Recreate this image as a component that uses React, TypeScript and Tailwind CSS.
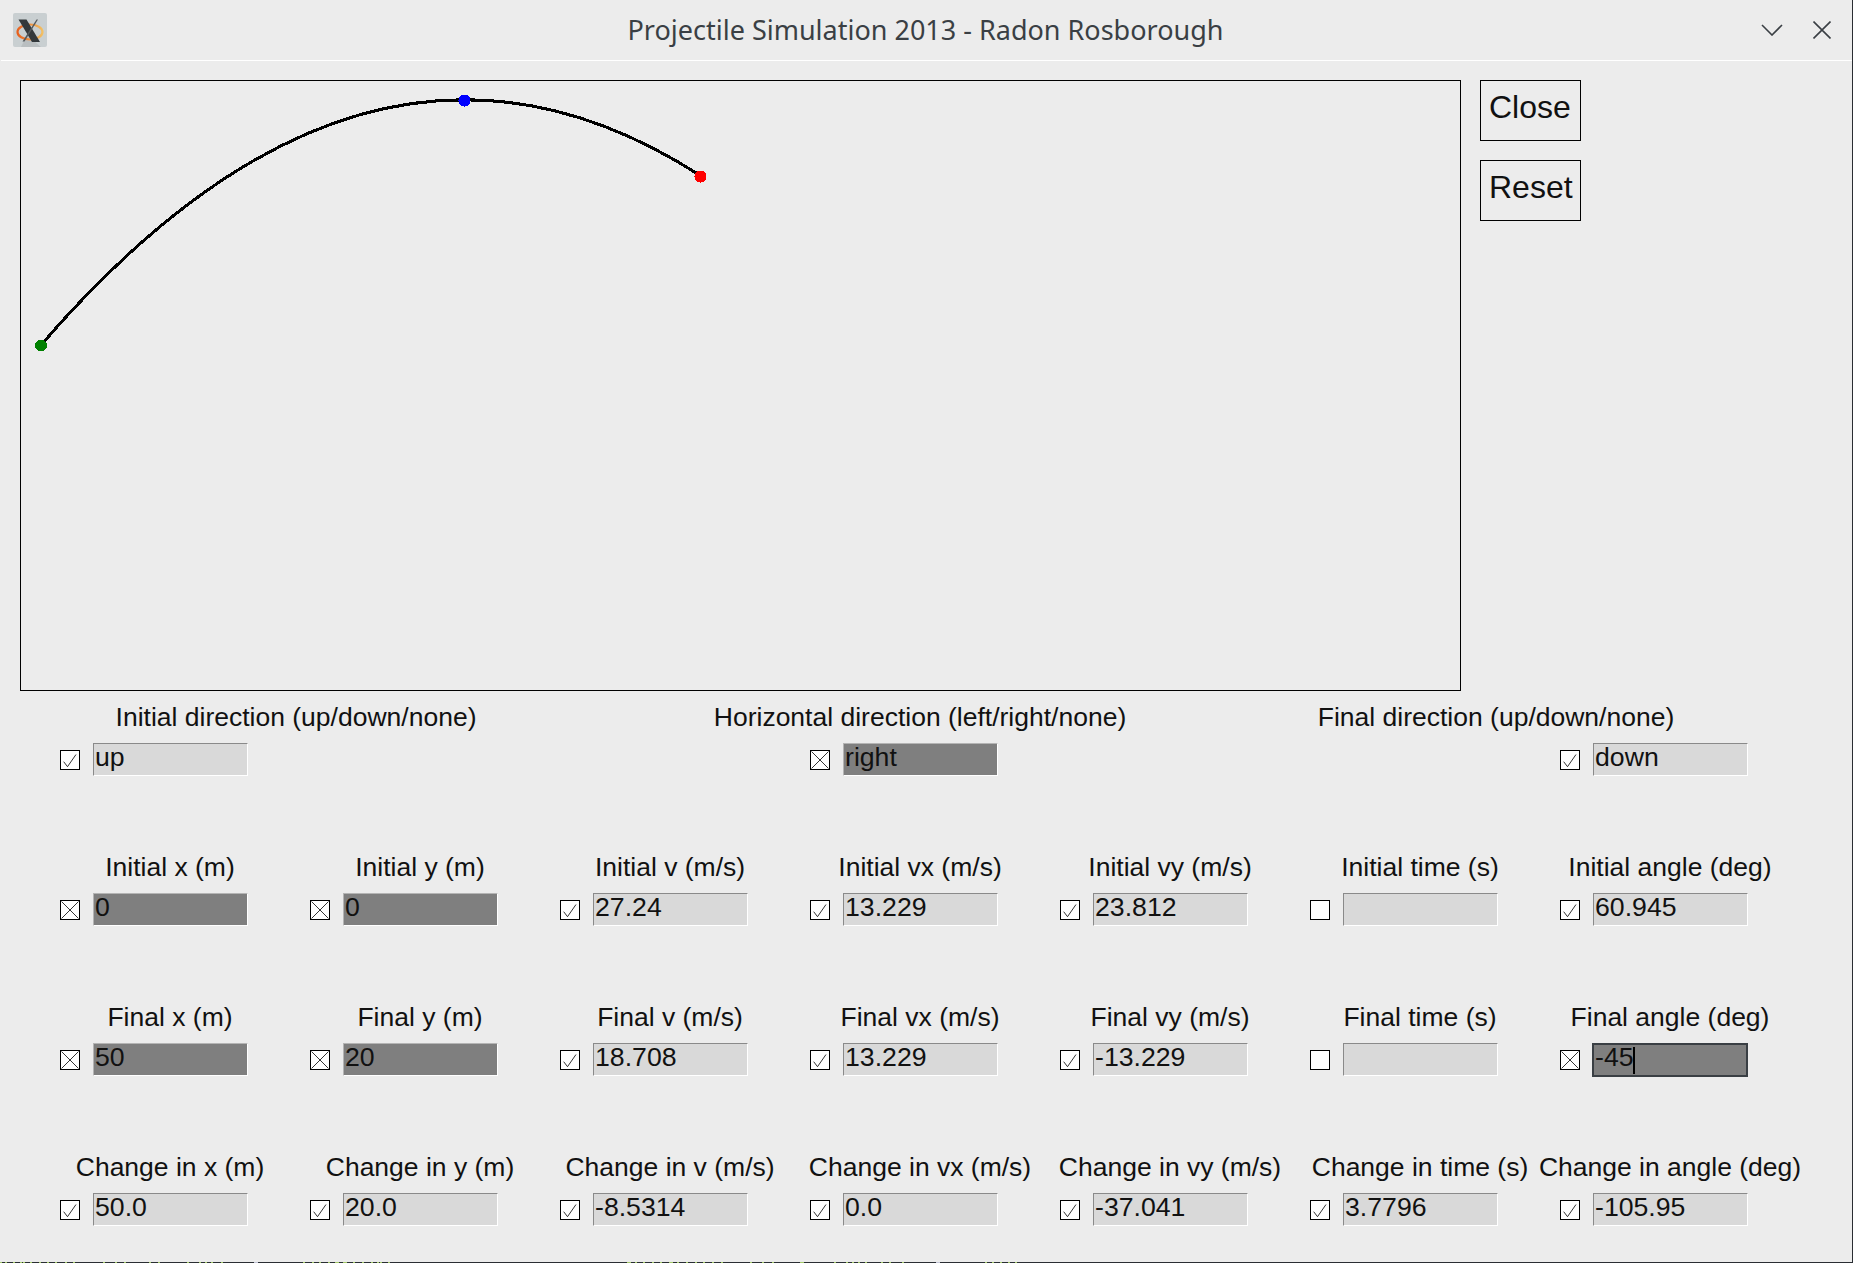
import { ReactNode } from "react";

const labelFont = "font-['Liberation_Sans',Arial,sans-serif]";

type Mark = "none" | "check" | "cross";

interface FieldProps {
  label?: string;
  value: string;
  mark: Mark;
  labelClass?: string;
  focused?: boolean;
}

function CheckBox({ mark }: { mark: Mark }) {
  return (
    <div className="h-5 w-5 shrink-0 border border-black bg-white">
      {mark !== "none" && (
        <svg viewBox="0 0 18 18" className="block h-[18px] w-[18px]" fill="none" stroke="#000" strokeWidth="0.8">
          {mark === "check" ? (
            <path d="M2.7 10.7 L6.5 15.7 L15 3.5" />
          ) : (
            <path d="M0.5 0.5 L17.5 17.5 M17.5 0.5 L0.5 17.5" />
          )}
        </svg>
      )}
    </div>
  );
}

function Field({ label, value, mark, labelClass = "ml-[42px]", focused = false }: FieldProps) {
  const filled = mark === "cross";
  let frame = "h-[33px] w-[155px] border pl-[1px] leading-[27px] border-r-white border-b-white";
  if (focused) {
    frame = "-ml-px h-[34px] w-[156px] border-2 border-[#3a3f44] pl-[1px] leading-[25px]";
  } else if (filled) {
    frame += " border-t-[#b4b4b4] border-l-[#b4b4b4]";
  } else {
    frame += " border-t-[#8a8a8a] border-l-[#8a8a8a]";
  }

  return (
    <div className="flex h-[150px] w-[250px] flex-col">
      <div className={`flex h-[43px] w-[156px] justify-center whitespace-nowrap pt-[2px] text-[26.5px] leading-[30px] text-[#111] ${labelClass}`}>
        {label}
      </div>
      <div className="flex h-[33px] items-center gap-[13px] pl-[10px]">
        <CheckBox mark={mark} />
        <div className={`relative shrink-0 text-[26.67px] text-[#111] ${frame} ${filled ? "bg-[#7f7f7f]" : "bg-[#d9d9d9]"}`}>
          {value}
          {focused && <span className="absolute top-[2px] left-[39px] h-[27px] w-[2px] bg-black" />}
        </div>
      </div>
    </div>
  );
}

function BoxButton({ children }: { children: ReactNode }) {
  return (
    <div className="flex h-[61px] w-[101px] items-start border border-black pl-2 pt-2 text-[32px] leading-[36px] text-[#111]">
      {children}
    </div>
  );
}

const rows: FieldProps[][] = [
  [
    { label: "Initial x (m)", value: "0", mark: "cross" },
    { label: "Initial y (m)", value: "0", mark: "cross" },
    { label: "Initial v (m/s)", value: "27.24", mark: "check" },
    { label: "Initial vx (m/s)", value: "13.229", mark: "check" },
    { label: "Initial vy (m/s)", value: "23.812", mark: "check" },
    { label: "Initial time (s)", value: "", mark: "none" },
    { label: "Initial angle (deg)", value: "60.945", mark: "check" },
  ],
  [
    { label: "Final x (m)", value: "50", mark: "cross" },
    { label: "Final y (m)", value: "20", mark: "cross" },
    { label: "Final v (m/s)", value: "18.708", mark: "check" },
    { label: "Final vx (m/s)", value: "13.229", mark: "check" },
    { label: "Final vy (m/s)", value: "-13.229", mark: "check" },
    { label: "Final time (s)", value: "", mark: "none" },
    { label: "Final angle (deg)", value: "-45", mark: "cross", focused: true },
  ],
  [
    { label: "Change in x (m)", value: "50.0", mark: "check" },
    { label: "Change in y (m)", value: "20.0", mark: "check" },
    { label: "Change in v (m/s)", value: "-8.5314", mark: "check" },
    { label: "Change in vx (m/s)", value: "0.0", mark: "check" },
    { label: "Change in vy (m/s)", value: "-37.041", mark: "check" },
    { label: "Change in time (s)", value: "3.7796", mark: "check" },
    { label: "Change in angle (deg)", value: "-105.95", mark: "check" },
  ],
];

// sliver of the window behind, showing along the bottom edge
const sliver = [
  0, 5, 13, 20, 23, 30, 39, 47, 55, 65, 73, 103, 115, 124, 149, 158, 187, 199, 205, 211, 221, 303, 312, 319, 328, 335, 337, 343, 345, 353, 362,
  371, 377, 380, 388, 627, 629, 635, 643, 652, 660, 669, 671, 677, 686, 695, 703, 712, 721, 750, 762, 772, 800, 802, 834, 846, 852, 858, 865,
  881, 889, 902, 985, 992, 1000, 1008, 1015,
];

function LogoIcon() {
  return (
    <svg viewBox="0 0 34 34" className="h-[34px] w-[34px]">
      <defs>
        <linearGradient id="ring" x1="0" y1="0" x2="1" y2="0">
          <stop offset="0" stopColor="#e8601c" />
          <stop offset="1" stopColor="#f2bf63" />
        </linearGradient>
      </defs>
      <rect width="34" height="34" rx="2" fill="#c9cfd1" />
      <path d="M8 34 L28 34 L14 22Z" fill="#b9bec0" />
      <ellipse cx="17" cy="19" rx="12.5" ry="7.5" fill="none" stroke="url(#ring)" strokeWidth="2.2" />
      <path d="M5.5 6.5 H13.5 L27 29 H19Z" fill="#33383b" />
      <path d="M23.5 6.5 L25 6.5 L11.5 28.5 L9.5 28.5Z" fill="#55595c" />
    </svg>
  );
}

export default function App() {
  return (
    <div className={`relative flex h-[1263px] w-[1853px] flex-col overflow-hidden border-r border-[#2a2e33] bg-[#ececec] ${labelFont}`}>
      {/* title bar */}
      <div className="ml-px flex h-[61px] shrink-0 items-center border-b border-white">
        <div className="flex-1 pl-3">
          <LogoIcon />
        </div>
        <div className="ml-[7px] font-['Noto_Sans',sans-serif] text-[27px] leading-[36px] text-[#3a3f44]">
          Projectile Simulation 2013 - Radon Rosborough
        </div>
        <div className="flex flex-1 items-center justify-end gap-[30px] pr-[21px]">
          <svg viewBox="0 0 22 12" className="h-3 w-[22px]" fill="none" stroke="#3a3f44" strokeWidth="1.6">
            <path d="M1 1 L11 11 L21 1" />
          </svg>
          <svg viewBox="0 0 18 18" className="h-[18px] w-[18px]" fill="none" stroke="#3a3f44" strokeWidth="1.6">
            <path d="M0.5 0.5 L17.5 17.5 M17.5 0.5 L0.5 17.5" />
          </svg>
        </div>
      </div>

      {/* canvas and buttons */}
      <div className="flex gap-[19px] pt-[19px] pl-5">
        <div className="h-[611px] w-[1441px] border border-black">
          <svg viewBox="21 81 1439 609" className="block h-[609px] w-[1439px]" fill="none" shapeRendering="crispEdges">
            <path d="M41 345 Q371 -37 701 176" stroke="#000" strokeWidth="3" />
            <circle cx="41" cy="345.5" r="6" fill="#008000" />
            <circle cx="464.5" cy="100.5" r="6" fill="#0000ff" />
            <circle cx="700.5" cy="176.5" r="6" fill="#ff0000" />
          </svg>
        </div>
        <div className="flex flex-col gap-[19px]">
          <BoxButton>Close</BoxButton>
          <BoxButton>Reset</BoxButton>
        </div>
      </div>

      {/* direction row */}
      <div className="ml-[50px] flex pt-[9px]">
        <Field label="Initial direction (up/down/none)" value="up" mark="check" labelClass="ml-[168px]" />
        <div className="w-[500px]" />
        <Field label="Horizontal direction (left/right/none)" value="right" mark="cross" />
        <div className="w-[500px]" />
        <Field label="Final direction (up/down/none)" value="down" mark="check" labelClass="ml-[-132px]" />
      </div>

      {/* value rows */}
      {rows.map((row, i) => (
        <div key={i} className="ml-[50px] flex">
          {row.map((field) => (
            <Field key={field.label} {...field} />
          ))}
        </div>
      ))}

      {/* bottom edge */}
      <svg viewBox="0 0 1853 1" className="absolute bottom-0 left-0 block h-px w-[1853px] bg-[#2a2e33]" shapeRendering="crispEdges">
        {sliver.map((x) => (
          <rect key={x} x={x} y="0" width="2" height="1" fill="#a4c96a" />
        ))}
        <rect x="254" y="0" width="4" height="1" fill="#c4c6d8" />
        <rect x="936" y="0" width="4" height="1" fill="#c4c6d8" />
      </svg>
    </div>
  );
}
